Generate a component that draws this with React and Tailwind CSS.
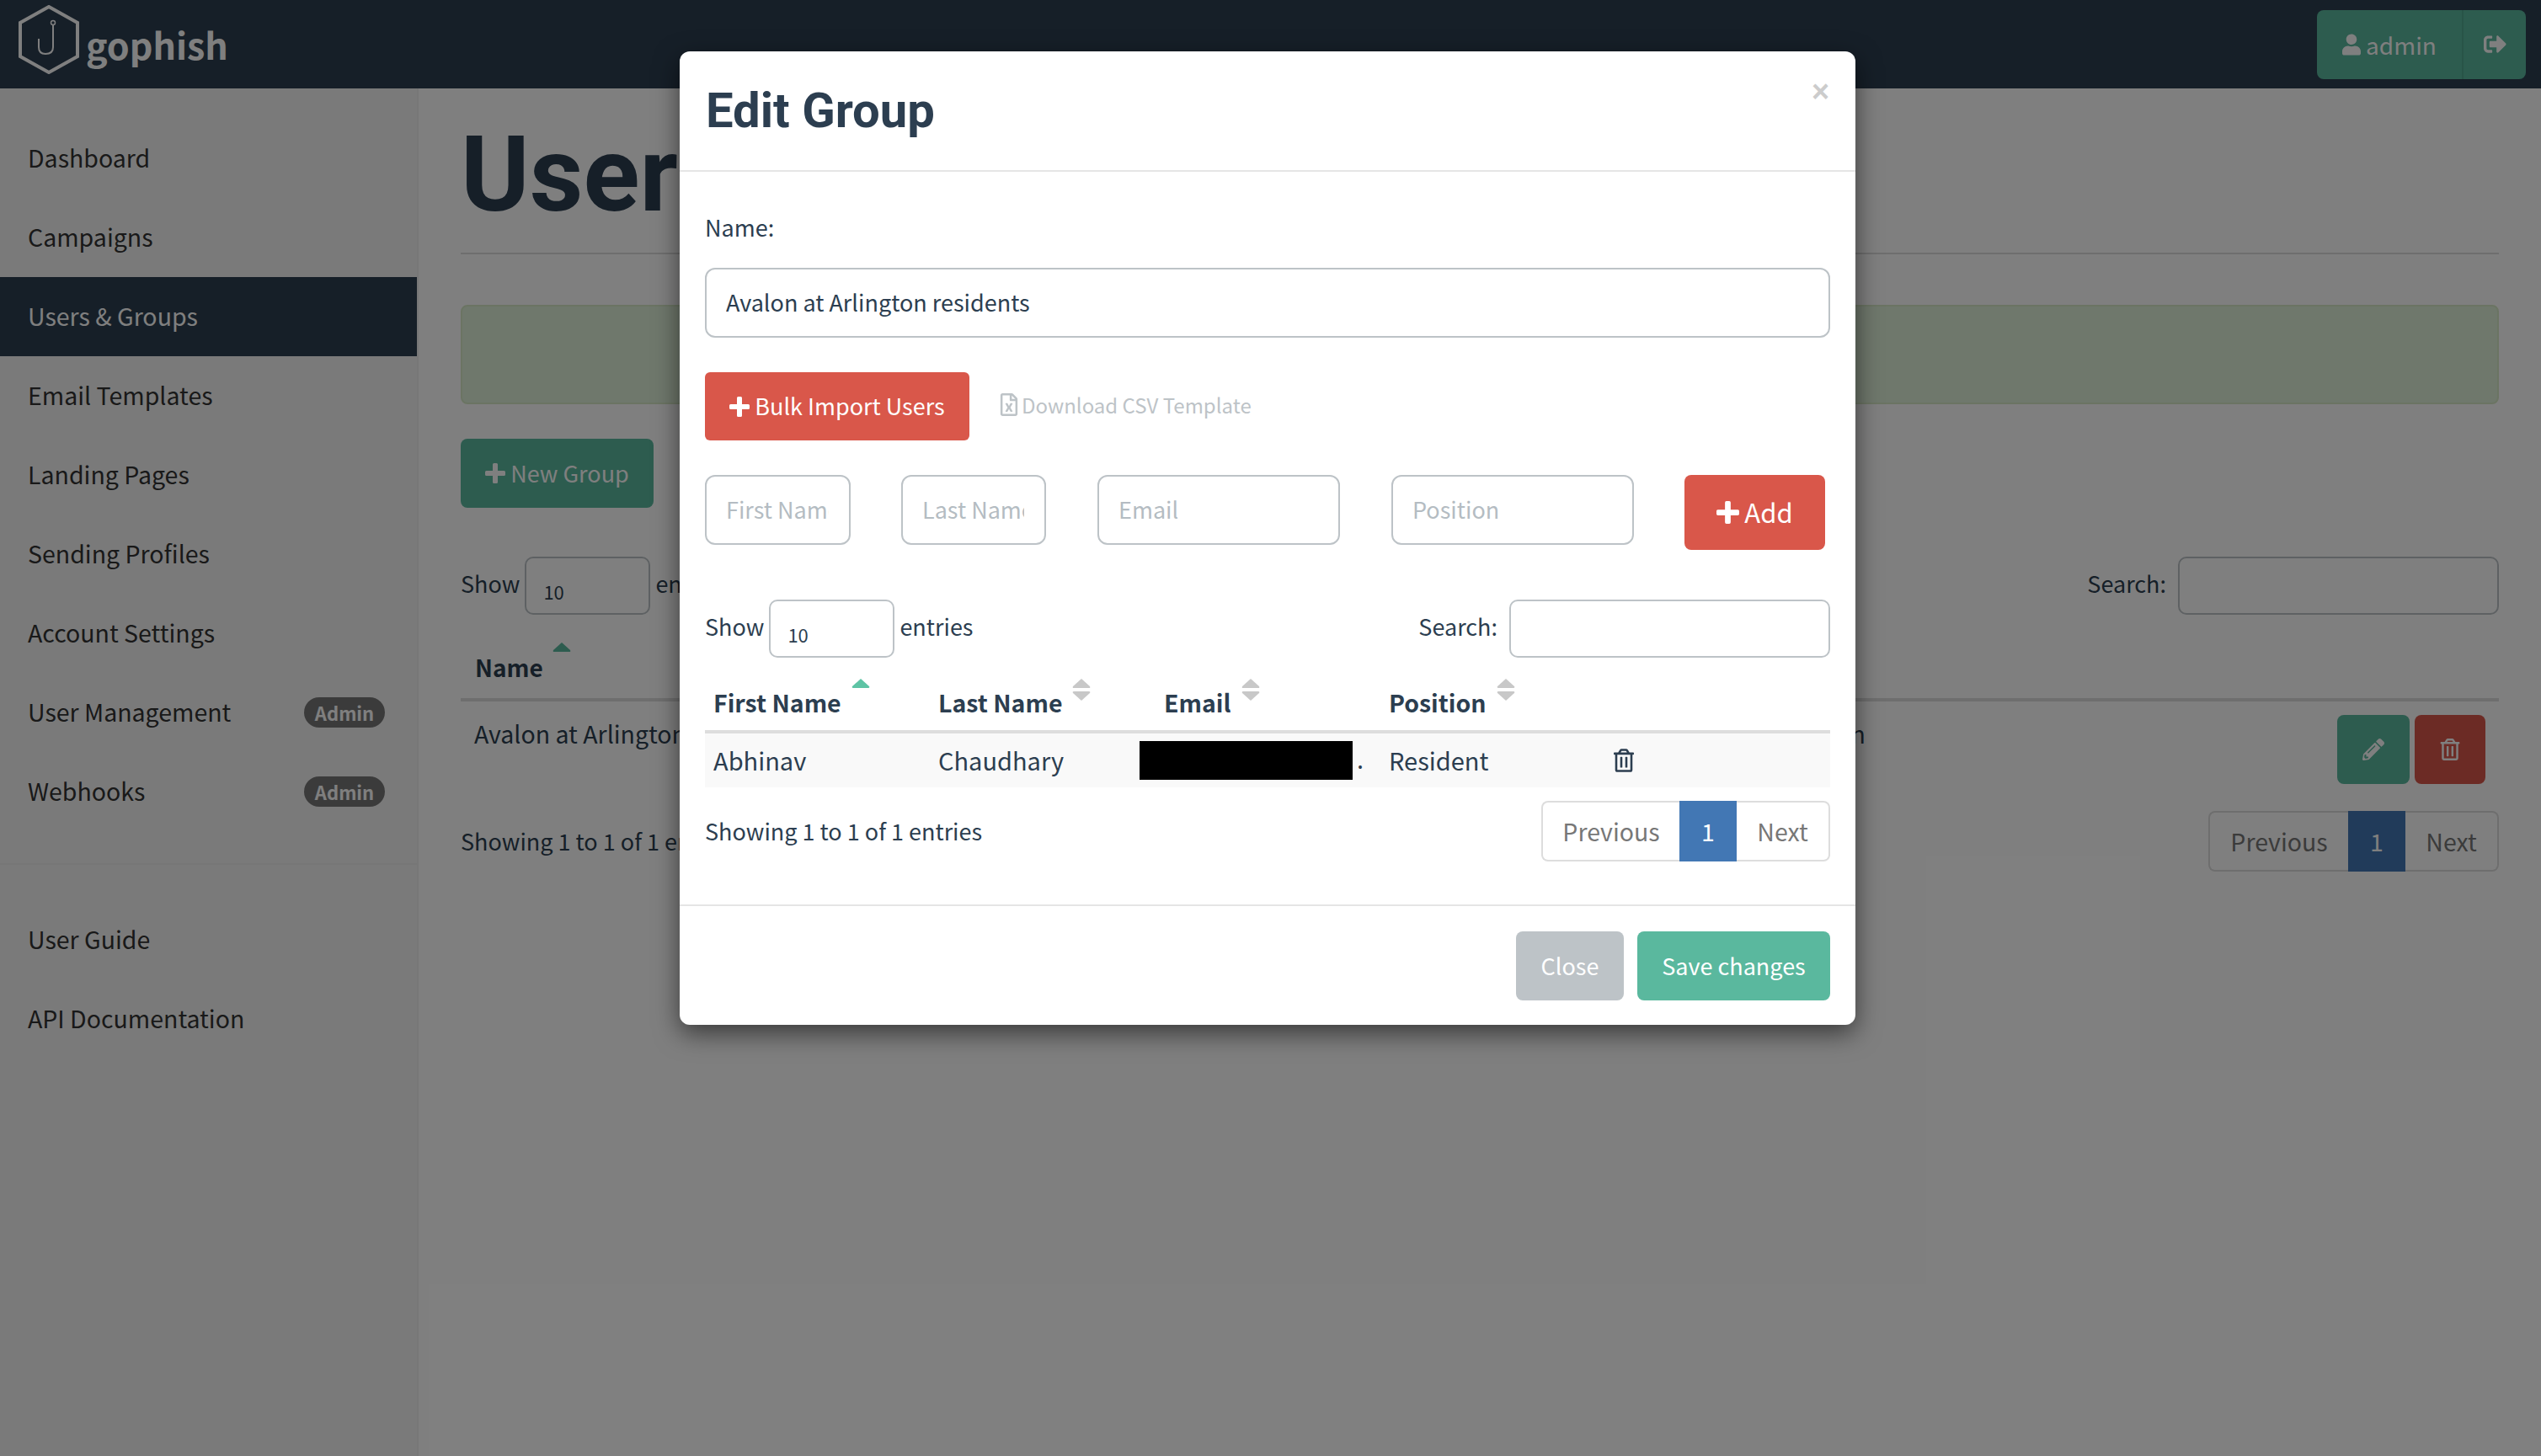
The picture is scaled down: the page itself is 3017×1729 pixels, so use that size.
import React from 'react';
import { FaUser, FaSignOutAlt, FaPencilAlt, FaRegTrashAlt, FaRegFileExcel } from 'react-icons/fa';

const sans = "font-['Noto_Sans_CJK_SC','Noto_Sans',sans-serif]";

const Plus = ({ size = 24 }) => (
  <svg width={size} height={size} viewBox="0 0 24 24" fill="currentColor" className="shrink-0">
    <path d="M9 1.5 Q9 0 10.5 0 L13.5 0 Q15 0 15 1.5 L15 9 L22.5 9 Q24 9 24 10.5 L24 13.5 Q24 15 22.5 15 L15 15 L15 22.5 Q15 24 13.5 24 L10.5 24 Q9 24 9 22.5 L9 15 L1.5 15 Q0 15 0 13.5 L0 10.5 Q0 9 1.5 9 L9 9 Z" />
  </svg>
);

const UpArrow = ({ fill }) => (
  <svg width="22" height="11" viewBox="0 0 22 11"><path d="M11 0 L21 9 Q22 11 20 11 L2 11 Q0 11 1 9 Z" fill={fill} /></svg>
);

const SortArrows = ({ active }) => (
  <span className="absolute flex flex-col gap-[4px] w-[22px] left-[calc(100%+12px)] top-[-7px]">
    <UpArrow fill={active ? '#5ec4a5' : '#c8c8c8'} />
    {!active && <svg width="22" height="11" viewBox="0 0 22 11"><path d="M11 11 L21 2 Q22 0 20 0 L2 0 Q0 0 1 2 Z" fill="#c8c8c8" /></svg>}
  </span>
);

const NavItem = ({ label, active, badge }) => (
  <div className={`h-[94px] flex items-center justify-between pl-[33px] pr-[38px] text-[28.5px] ${active ? 'bg-[#2c3e50] text-white' : 'text-[#333333]'}`}>
    <span className="mb-[2px]">{label}</span>
    {badge && <span className="h-[36px] w-[96px] rounded-full bg-[#777777] text-white text-[22px] font-bold flex items-center justify-center">Admin</span>}
  </div>
);

const Pagination = ({ className }) => (
  <div className={`flex h-[72px] text-[28.5px] text-[#777777] ${className}`}>
    <div className="flex-1 flex items-center justify-center border-2 border-r-0 border-[#dddddd] rounded-l-[8px]">Previous</div>
    <div className="w-[68px] flex items-center justify-center bg-[#4277b4] text-white">1</div>
    <div className="w-[111px] flex items-center justify-center border-2 border-l-0 border-[#dddddd] rounded-r-[8px]">Next</div>
  </div>
);

const Field = ({ value, placeholder, className }) => (
  <div className={`h-[83px] border-2 border-[#bdc3c7] rounded-[12px] flex items-center pl-[23px] pr-[24px] text-[27px] ${value ? 'text-[#2c3e50]' : 'text-[#b4bcc2]'} ${className}`}>
    <span className="block overflow-hidden whitespace-nowrap">{value || placeholder}</span>
  </div>
);

const TableTools = () => (
  <div className="flex items-center justify-between h-[69px] text-[27px]">
    <div className="flex items-center gap-[6px]">
      <span className="mb-[5px]">Show</span>
      <div className="w-[149px] h-[69px] border-2 border-[#bdc3c7] rounded-[10px] pl-[20px] pt-[21px] text-[22px] leading-[36px]">10</div>
      <span className="mb-[5px]">entries</span>
    </div>
    <div className="flex items-center gap-[14px]">
      <span className="mb-[5px]">Search:</span>
      <div className="w-[381px] h-[69px] border-2 border-[#bdc3c7] rounded-[10px]" />
    </div>
  </div>
);

export default function App() {
  return (
    <div className={`relative h-[1729px] w-[3017px] overflow-hidden bg-white text-[#2c3e50] ${sans}`}>
      {/* navbar */}
      <div className="h-[105px] bg-[#2c3e50] flex items-center justify-between pl-[22px] pr-[18px]">
        <div className="flex items-center gap-[8px] text-white">
          <svg width="72" height="82" viewBox="0 0 72 82" fill="none" stroke="white" className="-mt-[12px]">
            <path d="M36 2 L70 21 L70 61 L36 80 L2 61 L2 21 Z" strokeWidth="4" />
            <circle cx="41" cy="21" r="2.5" strokeWidth="1.5" />
            <path d="M41 24 L41 50 Q41 58 32 58 Q24 58 24 50 L24 40" strokeWidth="2" />
          </svg>
          <span className="text-[43px] font-bold leading-none">gophish</span>
        </div>
        <div className="h-[82px] w-[248px] rounded-[8px] bg-[#5ab89e] text-white flex text-[28px]">
          <div className="w-[172px] flex items-center justify-center gap-[6px]"><FaUser className="w-[22px] h-[26px]" />admin</div>
          <div className="flex-1 border-l-2 border-[#51a890] flex items-center justify-center"><FaSignOutAlt className="w-[27px] h-[27px]" /></div>
        </div>
      </div>

      <div className="flex h-[1624px]">
        {/* sidebar */}
        <div className="w-[497px] shrink-0 bg-[#f5f5f5] border-r-2 border-[#eeeeee]">
          <div className="h-[922px] pt-[36px] border-b-2 border-[#eeeeee]">
            <NavItem label="Dashboard" />
            <NavItem label="Campaigns" />
            <NavItem label="Users & Groups" active />
            <NavItem label="Email Templates" />
            <NavItem label="Landing Pages" />
            <NavItem label="Sending Profiles" />
            <NavItem label="Account Settings" />
            <NavItem label="User Management" badge />
            <NavItem label="Webhooks" badge />
          </div>
          <div className="pt-[42px]">
            <NavItem label="User Guide" />
            <NavItem label="API Documentation" />
          </div>
        </div>

        {/* main */}
        <div className="flex-1 pl-[50px] pr-[50px]">
          <div className="h-[197px] border-b-2 border-[#dddddd] flex items-start">
            <h1 className="font-['Roboto',sans-serif] font-bold text-[124px] leading-none mt-[41px]">Users &amp; Groups</h1>
          </div>
          <div className="mt-[60px] h-[118px] rounded-[8px] bg-[#dff0d8] border-2 border-[#d6e9c6]" />
          <div className="mt-[41px] h-[82px] w-[229px] rounded-[8px] bg-[#5ab89e] text-white text-[27px] flex items-center justify-center gap-[6px]"><Plus />New Group</div>
          <div className="mt-[58px]"><TableTools /></div>
          <div className="mt-[31px] h-[72px] border-b-4 border-[#dddddd] pl-[17px] pt-[11px] text-[28px] font-bold leading-[40px]">
            <span className="relative">Name<span className="absolute left-[calc(100%+11px)] top-[-9px]"><UpArrow fill="#5ab89e" /></span></span>
          </div>
          <div className="h-[100px] pt-[16px] pl-[16px] pr-[16px] grid grid-cols-[1652px_1fr] text-[28.5px]">
            <div className="flex justify-between mt-[2px] leading-[40px]">
              <span>Avalon at Arlington residents</span>
              <span>n</span>
            </div>
            <div className="flex justify-end gap-[6px]">
              <div className="w-[86px] h-[82px] rounded-[8px] bg-[#5ab89e] text-white flex items-center justify-center"><FaPencilAlt className="w-[26px] h-[26px]" /></div>
              <div className="w-[84px] h-[82px] rounded-[8px] bg-[#d9574a] text-white flex items-center justify-center"><FaRegTrashAlt className="w-[26px] h-[26px]" /></div>
            </div>
          </div>
          <div className="mt-[30px] flex justify-between items-center">
            <span className="text-[27px]">Showing 1 to 1 of 1 entries</span>
            <Pagination className="w-[345px]" />
          </div>
        </div>
      </div>

      {/* modal backdrop */}
      <div className="absolute inset-0 bg-black/50">
        <div className="absolute left-[807px] top-[61px] w-[1396px] h-[1156px] bg-white rounded-[12px] shadow-[0_10px_30px_rgba(0,0,0,0.55)] text-[27px]">
          <div className="relative h-[143px] border-b-2 border-[#e5e5e5] pl-[31px] pt-[35px]">
            <h4 className="font-['Roboto',sans-serif] font-bold text-[58px] leading-[70px]">Edit Group</h4>
            <span className="absolute right-[31px] top-[28px] text-[#cccccc] text-[36px] font-bold leading-[40px] font-['Liberation_Sans',sans-serif]">×</span>
          </div>
          <div className="px-[30px]">
            <div className="pt-[44px] leading-[44px] h-[114px]">Name:</div>
            <Field value="Avalon at Arlington residents" />
            <div className="mt-[41px] flex items-center">
              <div className="w-[314px] h-[81px] rounded-[6px] bg-[#d9574a] text-white flex items-center justify-center gap-[6px]"><Plus />Bulk Import Users</div>
              <FaRegFileExcel className="ml-[36px] mb-[4px] w-[22px] h-[27px] text-[#bdc3c7]" />
              <span className="ml-[4px] mb-[4px] text-[24px] text-[#bdc3c7]">Download CSV Template</span>
            </div>
            <div className="mt-[41px] flex items-start">
              <Field placeholder="First Name" className="w-[173px]" />
              <Field placeholder="Last Name" className="w-[172px] ml-[60px]" />
              <Field placeholder="Email" className="w-[288px] ml-[61px]" />
              <Field placeholder="Position" className="w-[288px] ml-[61px]" />
              <div className="ml-[60px] w-[167px] h-[89px] rounded-[8px] bg-[#d9574a] text-white flex items-center justify-center gap-[6px] text-[31px]"><Plus size={27} />Add</div>
            </div>
            <div className="mt-[59px]"><TableTools /></div>
            {/* group table */}
            <div className="mt-[20px] h-[70px] grid grid-cols-[267px_268px_267px_1fr] items-center pl-[10px] font-bold text-[28.5px] leading-[40px] border-b-4 border-[#dddddd]">
              <span><span className="relative">First Name<SortArrows active /></span></span>
              <span><span className="relative">Last Name<SortArrows /></span></span>
              <span><span className="relative">Email<SortArrows /></span></span>
              <span><span className="relative">Position<SortArrows /></span></span>
            </div>
            <div className="relative h-[64px] bg-[#f9f9f9] grid grid-cols-[267px_268px_267px_1fr] items-center pl-[10px] text-[29px]">
              <span>Abhinav</span>
              <span>Chaudhary</span>
              <span className="relative h-full">
                <span className="absolute left-[-29px] top-[9px] w-[253px] h-[46px] bg-black" />
                <span className="absolute left-[229px] top-[8px]">.</span>
              </span>
              <div className="flex items-center">
                <span>Resident</span>
                <FaRegTrashAlt className="ml-[149px] w-[24px] h-[28px] text-[#2c3e50]" />
              </div>
            </div>
            <div className="mt-[16px] flex items-center justify-between">
              <span>Showing 1 to 1 of 1 entries</span>
              <Pagination className="w-[343px]" />
            </div>
          </div>
          <div className="mt-[51px] border-t-2 border-[#e5e5e5] pt-[30px] pr-[30px] flex justify-end gap-[16px] text-white">
            <div className="w-[128px] h-[82px] rounded-[8px] bg-[#bdc3c7] flex items-center justify-center">Close</div>
            <div className="w-[229px] h-[82px] rounded-[8px] bg-[#5ab89e] flex items-center justify-center">Save changes</div>
          </div>
        </div>
      </div>
    </div>
  );
}
